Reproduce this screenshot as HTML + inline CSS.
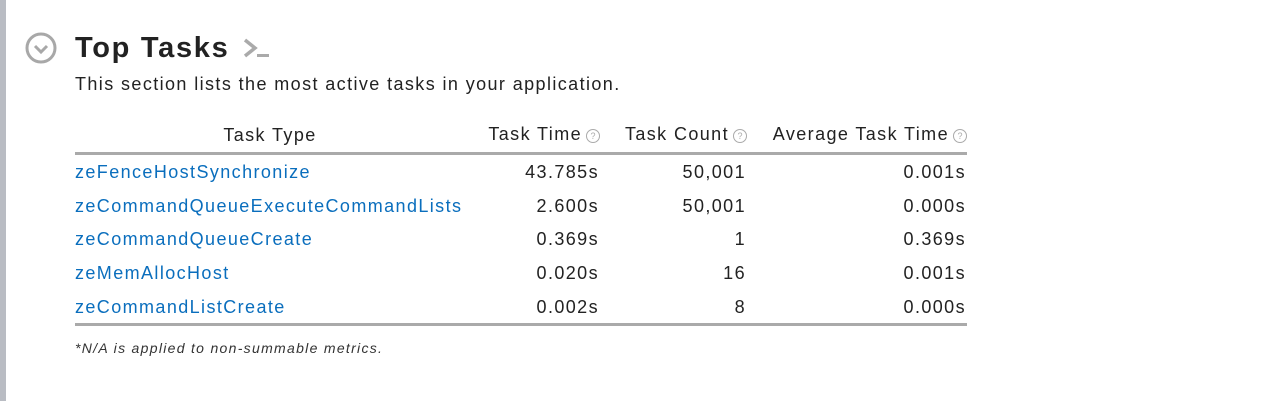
<!DOCTYPE html><html><head><style>
body{margin:0;width:1284px;height:401px;background:#fff;font-family:"Liberation Sans",sans-serif;position:relative;overflow:hidden;color:#222}
.bar{position:absolute;left:0;top:0;width:6px;height:401px;background:#b9bcc3}
.t{position:absolute;white-space:nowrap;letter-spacing:1.4px}
.r{text-align:right;margin-right:-1.4px}
a{color:#0a6ebd;text-decoration:none}
.q{display:inline-block;width:12px;height:12px;border:1px solid #aaa;border-radius:50%;font-size:9px;color:#aaa;text-align:center;line-height:12px;vertical-align:1px;margin-left:4px;letter-spacing:0}
.line{position:absolute;left:75px;width:892px;height:3px;background:#aaa}
</style></head><body>
<div class="bar"></div>
<svg class="t" style="left:24px;top:31px" width="34" height="34"><circle cx="17" cy="17" r="14" fill="none" stroke="#a8a8a8" stroke-width="3"/><path d="M11 15l6 6 6-6" fill="none" stroke="#a8a8a8" stroke-width="3"/></svg>
<div class="t" style="left:75px;top:32px;font-size:29px;font-weight:bold;color:#222;letter-spacing:1.7px">Top Tasks</div>
<svg class="t" style="left:243px;top:36px" width="28" height="26"><path d="M2 4l10 8-10 8" fill="none" stroke="#aaa" stroke-width="3.5"/><rect x="14" y="18" width="12" height="3" fill="#aaa"/></svg>
<div class="t" style="left:75px;top:74px;font-size:18px">This section lists the most active tasks in your application.</div>
<div class="t" style="left:75px;width:390px;text-align:center;top:125px;font-size:18px">Task Type</div>
<div class="t r" style="left:400px;width:200px;top:124px;font-size:18px">Task Time<span class="q">?</span></div>
<div class="t r" style="left:550px;width:197px;top:124px;font-size:18px">Task Count<span class="q">?</span></div>
<div class="t r" style="left:700px;width:267px;top:124px;font-size:18px">Average Task Time<span class="q">?</span></div>
<div class="line" style="top:152px"></div>
<div class="line" style="top:323px"></div>
<div style="position:absolute;top:162px;left:0;font-size:18px">
<div style="position:absolute;top:0"><a class="t" style="left:75px">zeFenceHostSynchronize</a><span class="t r" style="left:400px;width:199px">43.785s</span><span class="t r" style="left:546px;width:200px">50,001</span><span class="t r" style="left:766px;width:200px">0.001s</span></div>
<div style="position:absolute;top:34px"><a class="t" style="left:75px">zeCommandQueueExecuteCommandLists</a><span class="t r" style="left:400px;width:199px">2.600s</span><span class="t r" style="left:546px;width:200px">50,001</span><span class="t r" style="left:766px;width:200px">0.000s</span></div>
<div style="position:absolute;top:67px"><a class="t" style="left:75px">zeCommandQueueCreate</a><span class="t r" style="left:400px;width:199px">0.369s</span><span class="t r" style="left:546px;width:200px">1</span><span class="t r" style="left:766px;width:200px">0.369s</span></div>
<div style="position:absolute;top:101px"><a class="t" style="left:75px">zeMemAllocHost</a><span class="t r" style="left:400px;width:199px">0.020s</span><span class="t r" style="left:546px;width:200px">16</span><span class="t r" style="left:766px;width:200px">0.001s</span></div>
<div style="position:absolute;top:135px"><a class="t" style="left:75px">zeCommandListCreate</a><span class="t r" style="left:400px;width:199px">0.002s</span><span class="t r" style="left:546px;width:200px">8</span><span class="t r" style="left:766px;width:200px">0.000s</span></div>
</div>
<div class="t" style="left:75px;top:340px;font-size:14px;font-style:italic;color:#333;letter-spacing:1.3px">*N/A is applied to non-summable metrics.</div>
</body></html>
